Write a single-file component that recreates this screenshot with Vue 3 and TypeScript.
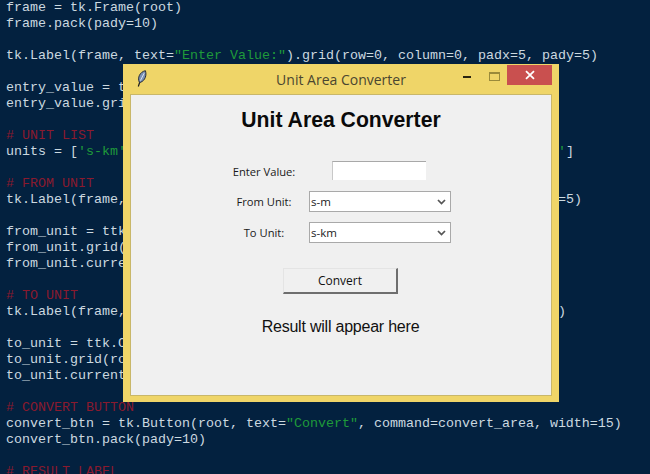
<script setup lang="ts">
type Kind = 'p' | 's' | 'c'
type Seg = [Kind, string]

const p = (t: string): Seg => ['p', t]
const s = (t: string): Seg => ['s', t]
const c = (t: string): Seg => ['c', t]

const lines: Seg[][] = [
  [p('frame = tk.Frame(root)')],
  [p('frame.pack(pady=10)')],
  [],
  [p('tk.Label(frame, text='), s('"Enter Value:"'), p(').grid(row=0, column=0, padx=5, pady=5)')],
  [],
  [p('entry_value = tk.Entry(frame)')],
  [p('entry_value.grid(row=0, column=1)')],
  [],
  [c('# UNIT LIST')],
  [p('units = ['), s("'s-km'"), p(', '), s("'s-m'"), p(', '), s("'s-cm'"), p(', '), s("'s-mm'"), p(', '), s("'s-ft'"), p(', '), s("'s-yd'"), p(', '), s("'s-in'"), p(', '), s("'s-mi'"), p(']')],
  [],
  [c('# FROM UNIT')],
  [p('tk.Label(frame, text='), s('"From Unit:"'), p(').grid(row=1, column=0, padx=5, pady=5)')],
  [],
  [p('from_unit = ttk.Combobox(frame, values=units)')],
  [p('from_unit.grid(row=1, column=1)')],
  [p('from_unit.current(1)')],
  [],
  [c('# TO UNIT')],
  [p('tk.Label(frame, text='), s('"To Unit:"'), p(').grid(row=2, column=0, padx=5, pady=5)')],
  [],
  [p('to_unit = ttk.Combobox(frame, values=units)')],
  [p('to_unit.grid(row=2, column=1)')],
  [p('to_unit.current(0)')],
  [],
  [c('# CONVERT BUTTON')],
  [p('convert_btn = tk.Button(root, text='), s('"Convert"'), p(', command=convert_area, width=15)')],
  [p('convert_btn.pack(pady=10)')],
  [],
  [c('# RESULT LABEL')]
]
</script>

<template>
  <div class="desktop">
    <pre class="code"><div v-for="(line, i) in lines" :key="i" class="line"><span v-for="(seg, j) in line" :key="j" :class="seg[0]">{{ seg[1] }}</span></div></pre>

    <section class="window">
      <header class="titlebar">
        <svg class="feather" width="10" height="17" viewBox="0 0 10 17">
          <path d="M1.3 16.5 L3 11.5" stroke="#1c1c1c" stroke-width="1.2" fill="none" />
          <path d="M2.4 12.4 C0.2 8 2.6 2 8.4 0.7 C9.8 5 8.4 10.4 3.4 12.4 Z" fill="#7b92b6" stroke="#262b36" stroke-width="1" />
          <path d="M3.4 10.6 L7.2 3.2" stroke="#e3e9f2" stroke-width="0.9" fill="none" />
        </svg>
        <span class="title">Unit Area Converter</span>
        <div class="controls">
          <span class="min"></span>
          <span class="max"></span>
          <span class="close">
            <svg width="10" height="10" viewBox="0 0 10 10">
              <path d="M1 1.2 L9 8.8 M9 1.2 L1 8.8" stroke="#fff" stroke-width="1.8" />
            </svg>
          </span>
        </div>
      </header>

      <main class="client">
        <h1 class="heading">Unit Area Converter</h1>
        <div class="form">
          <label class="label">Enter Value:</label>
          <div class="cell"><input class="entry" type="text" /></div>
          <label class="label">From Unit:</label>
          <div class="combo">
            <span>s-m</span>
            <svg class="chev" width="9" height="6" viewBox="0 0 9 6"><path d="M1 1 L4.5 4.6 L8 1" stroke="#555" stroke-width="1.7" fill="none" /></svg>
          </div>
          <label class="label">To Unit:</label>
          <div class="combo">
            <span>s-km</span>
            <svg class="chev" width="9" height="6" viewBox="0 0 9 6"><path d="M1 1 L4.5 4.6 L8 1" stroke="#555" stroke-width="1.7" fill="none" /></svg>
          </div>
        </div>
        <button class="convert" type="button">Convert</button>
        <p class="result">Result will appear here</p>
      </main>
    </section>
  </div>
</template>

<style>
html, body { margin: 0; padding: 0; background: #03213f; }
</style>

<style scoped>
.desktop {
  position: relative;
  width: 650px;
  height: 474px;
  overflow: hidden;
  background: #03213f;
}
.code {
  margin: 0;
  padding: 0 0 0 6px;
  font-family: "Liberation Mono", monospace;
  font-size: 13.33px;
  line-height: 16px;
  color: #ccd9e0;
}
.line { height: 16px; white-space: pre; }
.s { color: #1f9a3a; }
.c { color: #8a1a2e; }

.window {
  position: absolute;
  left: 123px;
  top: 64px;
  width: 436px;
  height: 338px;
  box-sizing: border-box;
  padding: 0 7px 6px;
  background: #efd568;
  display: flex;
  flex-direction: column;
}
.titlebar {
  position: relative;
  height: 30px;
  flex: none;
  display: flex;
  align-items: center;
  justify-content: center;
}
.feather { position: absolute; left: 7px; top: 6px; }
.title {
  font-family: "Open Sans", sans-serif;
  font-size: 14px;
  color: #4a4630;
}
.controls {
  position: absolute;
  right: 0;
  top: 1px;
  display: flex;
  align-items: flex-start;
}
.min {
  width: 8px;
  height: 2px;
  background: #2a2410;
  margin: 11px 18px 0 0;
}
.max {
  width: 9px;
  height: 6px;
  border: 1px solid #9a8a3a;
  border-top-width: 2px;
  margin: 7px 7px 0 0;
}
.close {
  width: 45px;
  height: 20px;
  background: #c9504f;
  display: flex;
  align-items: center;
  justify-content: center;
}
.client {
  flex: 1;
  box-sizing: border-box;
  background: #f0f0f0;
  border: 1px solid #c9b769;
  display: flex;
  flex-direction: column;
  align-items: center;
  padding-top: 12px;
}
.heading {
  margin: 0;
  font-family: "Liberation Sans", sans-serif;
  font-weight: 700;
  font-size: 21.2px;
  line-height: 25px;
  color: #0a0a0a;
}
.form {
  margin: 29px 0 0 -12px;
  display: grid;
  grid-template-columns: 90px 142px;
  grid-template-rows: 20px 21px 21px;
  row-gap: 10px;
}
.label {
  font-family: "Open Sans", sans-serif;
  font-size: 11.2px;
  line-height: 19px;
  color: #1a1a1a;
  text-align: center;
  align-self: center;
}
.cell { display: flex; justify-content: center; align-items: flex-start; padding-right: 2px; }
.entry {
  width: 94px;
  height: 19px;
  box-sizing: border-box;
  margin: 0;
  padding: 0;
  background: #fff;
  border: 0;
  border-top: 1px solid #a8a8a8;
  border-left: 1px solid #c8c8c8;
  outline: none;
}
.combo {
  position: relative;
  box-sizing: border-box;
  height: 21px;
  background: #fff;
  border: 1px solid #a9a9a9;
  padding-left: 1px;
  display: flex;
  align-items: center;
  font-family: "Open Sans", sans-serif;
  font-size: 11.5px;
  color: #222;
}
.chev { position: absolute; right: 4px; top: 7px; }
.convert {
  margin: 25px 0 0 -1px;
  width: 115px;
  height: 26px;
  box-sizing: border-box;
  padding: 0;
  background: #f0f0f0;
  border: 1px solid #e4e4e4;
  border-right: 2px solid #6e6e6e;
  border-bottom: 2px solid #6e6e6e;
  font-family: "Open Sans", sans-serif;
  font-size: 12px;
  color: #111;
}
.result {
  margin: 23px 0 0 -1px;
  font-family: "Liberation Sans", sans-serif;
  font-size: 16px;
  letter-spacing: -0.22px;
  line-height: 20px;
  color: #111;
}
</style>
